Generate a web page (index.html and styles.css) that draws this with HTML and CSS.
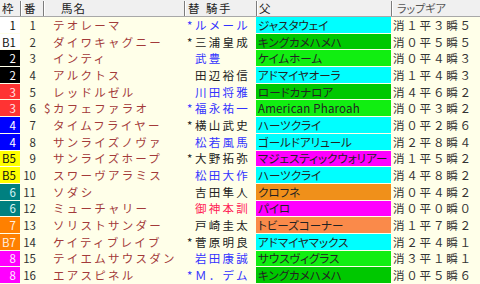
FILE: index.html
```html
<!DOCTYPE html>
<html lang="ja">
<head>
<meta charset="utf-8">
<link rel="stylesheet" href="styles.css">
</head>
<body>
<div class="table">
  <div class="cols head">
    <div class="h-waku">枠</div>
    <div class="h-num">番</div>
    <div class="h-name">馬名</div>
    <div class="h-jockey"><span class="h-kae">替</span>騎手</div>
    <div class="h-sire">父</div>
    <div class="h-gear">ラップギア</div>
  </div>

  <div class="cols row">
    <div class="waku w1">1</div><div class="num">1</div>
    <div class="name"><span class="mk"></span>テオレーマ</div>
    <div class="jockey blue"><span class="jm">*</span>ルメール</div>
    <div class="sire cyan">ジャスタウェイ</div>
    <div class="gear">消１平３瞬５</div>
  </div>
  <div class="cols row">
    <div class="waku w1">B1</div><div class="num">2</div>
    <div class="name"><span class="mk"></span>ダイワキャグニー</div>
    <div class="jockey black"><span class="jm">*</span>三浦皇成</div>
    <div class="sire dkgreen">キングカメハメハ</div>
    <div class="gear">消０平５瞬５</div>
  </div>
  <div class="cols row">
    <div class="waku w2">2</div><div class="num">3</div>
    <div class="name"><span class="mk"></span>インティ</div>
    <div class="jockey blue"><span class="jm"></span>武豊</div>
    <div class="sire green">ケイムホーム</div>
    <div class="gear">消０平４瞬３</div>
  </div>
  <div class="cols row">
    <div class="waku w2">2</div><div class="num">4</div>
    <div class="name"><span class="mk"></span>アルクトス</div>
    <div class="jockey black"><span class="jm"></span>田辺裕信</div>
    <div class="sire cyan">アドマイヤオーラ</div>
    <div class="gear">消１平４瞬３</div>
  </div>
  <div class="cols row">
    <div class="waku w3">3</div><div class="num">5</div>
    <div class="name"><span class="mk"></span>レッドルゼル</div>
    <div class="jockey blue"><span class="jm"></span>川田将雅</div>
    <div class="sire dkgreen">ロードカナロア</div>
    <div class="gear">消４平６瞬２</div>
  </div>
  <div class="cols row">
    <div class="waku w3">3</div><div class="num">6</div>
    <div class="name"><span class="mk">$</span>カフェファラオ</div>
    <div class="jockey blue"><span class="jm">*</span>福永祐一</div>
    <div class="sire green latin">American Pharoah</div>
    <div class="gear">消０平３瞬２</div>
  </div>
  <div class="cols row">
    <div class="waku w4">4</div><div class="num">7</div>
    <div class="name"><span class="mk"></span>タイムフライヤー</div>
    <div class="jockey black"><span class="jm">*</span>横山武史</div>
    <div class="sire cyan">ハーツクライ</div>
    <div class="gear">消０平２瞬６</div>
  </div>
  <div class="cols row">
    <div class="waku w4">4</div><div class="num">8</div>
    <div class="name"><span class="mk"></span>サンライズノヴァ</div>
    <div class="jockey blue"><span class="jm"></span>松若風馬</div>
    <div class="sire cyan">ゴールドアリュール</div>
    <div class="gear">消２平８瞬４</div>
  </div>
  <div class="cols row">
    <div class="waku w5">B5</div><div class="num">9</div>
    <div class="name"><span class="mk"></span>サンライズホープ</div>
    <div class="jockey black"><span class="jm">*</span>大野拓弥</div>
    <div class="sire magenta">マジェスティックウォリアー</div>
    <div class="gear">消１平５瞬２</div>
  </div>
  <div class="cols row">
    <div class="waku w5">B5</div><div class="num">10</div>
    <div class="name"><span class="mk"></span>スワーヴアラミス</div>
    <div class="jockey blue"><span class="jm"></span>松田大作</div>
    <div class="sire cyan">ハーツクライ</div>
    <div class="gear">消４平８瞬２</div>
  </div>
  <div class="cols row">
    <div class="waku w6">6</div><div class="num">11</div>
    <div class="name"><span class="mk"></span>ソダシ</div>
    <div class="jockey black"><span class="jm"></span>吉田隼人</div>
    <div class="sire orange">クロフネ</div>
    <div class="gear">消０平４瞬２</div>
  </div>
  <div class="cols row">
    <div class="waku w6">6</div><div class="num">12</div>
    <div class="name"><span class="mk"></span>ミューチャリー</div>
    <div class="jockey red"><span class="jm"></span>御神本訓</div>
    <div class="sire magenta">パイロ</div>
    <div class="gear">消０平０瞬０</div>
  </div>
  <div class="cols row">
    <div class="waku w7">7</div><div class="num">13</div>
    <div class="name"><span class="mk"></span>ソリストサンダー</div>
    <div class="jockey black"><span class="jm"></span>戸崎圭太</div>
    <div class="sire salmon">トビーズコーナー</div>
    <div class="gear">消１平７瞬２</div>
  </div>
  <div class="cols row">
    <div class="waku w7">B7</div><div class="num">14</div>
    <div class="name"><span class="mk"></span>ケイティブレイブ</div>
    <div class="jockey black"><span class="jm">*</span>菅原明良</div>
    <div class="sire cyan">アドマイヤマックス</div>
    <div class="gear">消２平４瞬１</div>
  </div>
  <div class="cols row">
    <div class="waku w8">8</div><div class="num">15</div>
    <div class="name"><span class="mk"></span>テイエムサウスダン</div>
    <div class="jockey blue"><span class="jm"></span>岩田康誠</div>
    <div class="sire green">サウスヴィグラス</div>
    <div class="gear">消３平１瞬１</div>
  </div>
  <div class="cols row">
    <div class="waku w8">8</div><div class="num">16</div>
    <div class="name"><span class="mk"></span>エアスピネル</div>
    <div class="jockey blue"><span class="jm">*</span>Ｍ．デム</div>
    <div class="sire dkgreen">キングカメハメハ</div>
    <div class="gear">消０平５瞬６</div>
  </div>
</div>
</body>
</html>
```

FILE: styles.css
```css
html, body {
  margin: 0;
  padding: 0;
}
body {
  background: #ffffe9;
  font-family: "Noto Sans CJK JP", "Noto Sans", sans-serif;
  font-size: 11.5px;
  color: #222;
}
.table {
  display: grid;
  grid-template-rows: 17px repeat(16, minmax(0, 1fr));
  width: 480px;
  height: 284px;
}
.cols {
  display: grid;
  grid-template-columns: 20px 23px 141px 72px 135px 1fr;
  min-height: 0;
}

/* header */
.head {
  background: #f0f0f0;
  border-bottom: 1px solid #a8a8a8;
  height: 16px;
  color: #222;
}
.head > div {
  white-space: nowrap;
  margin-top: 1px;
  height: 15px;
  line-height: 14.8px;
}
.head > div + div {
  border-left: 1px solid #7c7c7c;
  box-shadow: inset 1px 0 #ffffff;
}
.h-waku { padding-left: 2px; }
.h-num { padding-left: 3px; }
.h-name { padding-left: 17px; letter-spacing: 1px; }
.h-jockey { padding-left: 3px; letter-spacing: 1.5px; }
.h-kae { margin-right: 5px; }
.h-sire { padding-left: 2px; }
.h-gear {
  padding-left: 5px;
  font-size: 11px;
  color: #555;
  font-feature-settings: "palt";
}

/* body rows */
.row > div {
  display: flex;
  align-items: center;
  white-space: nowrap;
  min-height: 0;
  line-height: 13px;
  padding-top: 1px;
  border-bottom: 1px solid transparent;
  background-clip: padding-box;
}
.waku {
  justify-content: flex-end;
  padding-right: 4px;
}
.w1 { background-color: #ffffff; color: #111; }
.w2 { background-color: #000000; color: #ffffff; }
.w3 { background-color: #ff3333; color: #ffe8e8; }
.w4 { background-color: #0000ff; color: #ffffff; }
.w5 { background-color: #ffff00; color: #111; }
.w6 { background-color: #008080; color: #d8f4f4; }
.w7 { background-color: #ff8000; color: #fff0e0; }
.w8 { background-color: #ff00ff; color: #ffe8ff; }

.num {
  justify-content: flex-end;
  padding-right: 7px;
  color: #333;
}
.name {
  padding-left: 1px;
  color: #a33a3a;
  letter-spacing: 2.25px;
}
.mk {
  display: inline-block;
  width: 9px;
  letter-spacing: 0;
}
.jockey {
  padding-left: 3px;
  letter-spacing: 2.25px;
}
.jm {
  display: inline-block;
  width: 8px;
  letter-spacing: 0;
}
.blue { color: #3333ff; }
.black { color: #222; }
.red { color: #ff2255; }

.sire {
  padding-left: 2px;
  color: #222;
  font-feature-settings: "palt";
  letter-spacing: 0;
}
.latin { letter-spacing: 0.2px; }
.cyan { background-color: #00ffff; }
.dkgreen { background-color: #00c800; }
.green { background-color: #11ee11; }
.magenta { background-color: #ff00ff; }
.orange { background-color: #f0901a; }
.salmon { background-color: #fa8a4a; }

.gear {
  padding-left: 2px;
  color: #333;
  letter-spacing: 1.8px;
}
```
